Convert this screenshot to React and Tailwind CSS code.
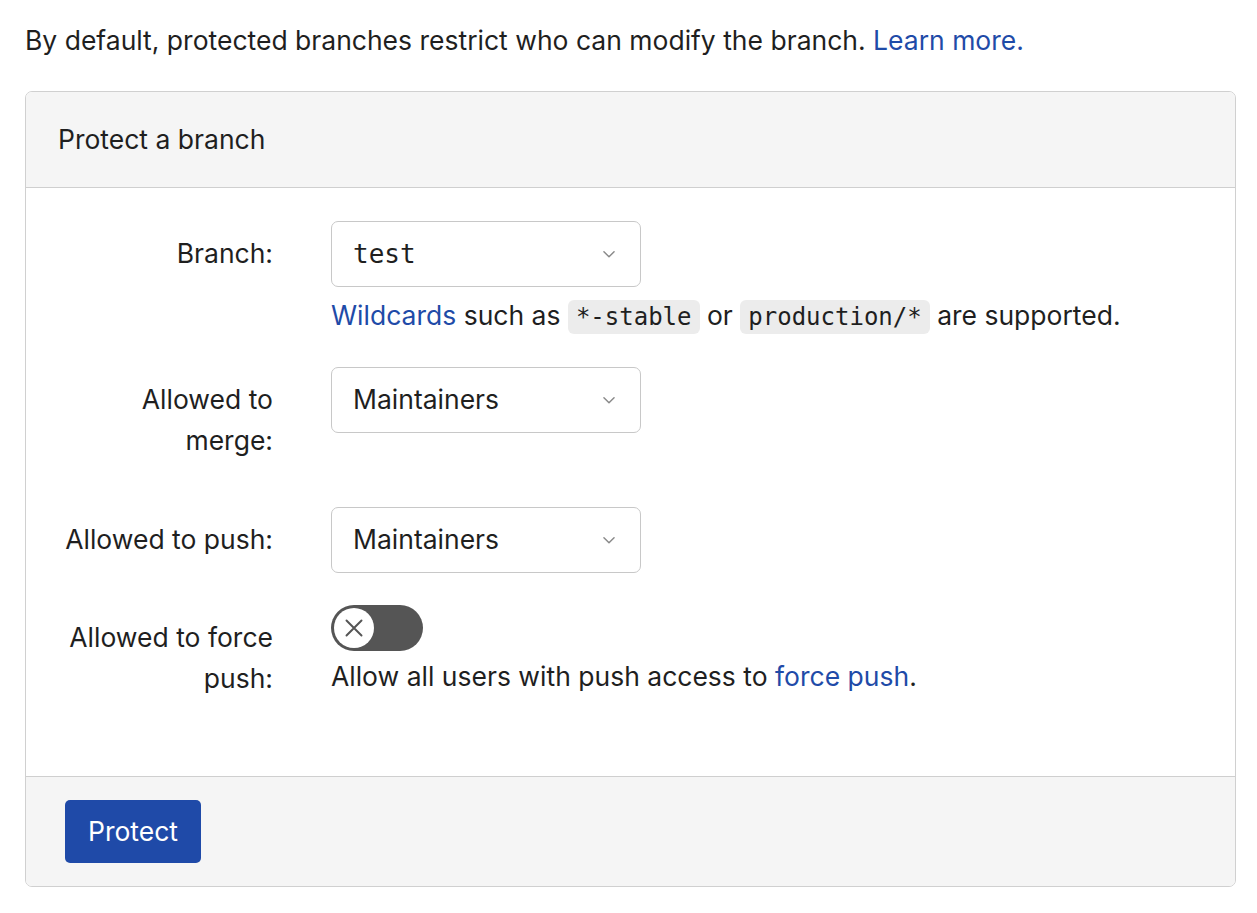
import { useState } from 'react';

const sans = { fontFamily: 'Inter, "Liberation Sans", Arial, sans-serif' };
const mono = { fontFamily: '"DejaVu Sans Mono", "Liberation Mono", monospace' };

function Chevron() {
  return (
    <svg className="w-[18px] h-[18px] text-[#8a8a8a]" viewBox="0 0 16 16" fill="none" stroke="currentColor" strokeWidth={1.3}>
      <path d="M3.5 6l4.5 4.5 4.5-4.5" strokeLinecap="round" strokeLinejoin="round" />
    </svg>
  );
}

function Select({ value, isMono }) {
  return (
    <div className="w-[310px] h-[66px] border border-[#c8c8c8] rounded-[7px] bg-white flex items-center justify-between pl-[21px] pr-[22px]">
      <span className={isMono ? 'text-[26px] text-[#1f1f1f]' : 'text-[26.5px] text-[#1f1f1f]'} style={isMono ? mono : sans}>
        {value}
      </span>
      <Chevron />
    </div>
  );
}

function Code({ children }) {
  return (
    <code className="bg-[#ececec] rounded-[6px] px-[8px] py-[3px] text-[24px] text-[#1f1f1f]" style={mono}>
      {children}
    </code>
  );
}

function Row({ label, children, className = '' }) {
  return (
    <div className={`flex items-start ${className}`}>
      <div className="w-[247px] shrink-0 flex justify-end">
        <label className="w-[212px] text-right text-[26.5px] leading-[41px] text-[#1f1f1f] pt-[12px]">{label}</label>
      </div>
      <div className="ml-[58px] flex-1">{children}</div>
    </div>
  );
}

export default function App() {
  const [force, setForce] = useState(false);

  return (
    <div className="min-h-[913px] bg-white text-[#1f1f1f] px-[25px] pt-[20px]" style={sans}>
      <p className="text-[26.5px] leading-[40px]">
        By default, protected branches restrict who can modify the branch.{' '}
        <a href="#" className="text-[#1f4ba8]">Learn more.</a>
      </p>

      <div className="mt-[31px] w-[1211px] border border-[#d0d0d0] rounded-[7px] overflow-hidden">
        <div className="h-[96px] bg-[#f5f5f5] border-b border-[#cfcfcf] flex items-center pl-[32px]">
          <h3 className="text-[26.5px]">Protect a branch</h3>
        </div>

        <div className="bg-white pt-[33px] pb-[77px]">
          <Row label="Branch:">
            <Select value="test" isMono />
            <p className="text-[26.5px] leading-[40px] mt-[8px]">
              <a href="#" className="text-[#1f4ba8]">Wildcards</a> such as <Code>*-stable</Code> or <Code>production/*</Code> are supported.
            </p>
          </Row>

          <Row label="Allowed to merge:" className="mt-[30px]">
            <Select value="Maintainers" />
          </Row>

          <Row label="Allowed to push:" className="mt-[46px]">
            <Select value="Maintainers" />
          </Row>

          <Row label="Allowed to force push:" className="mt-[32px]">
            <button
              type="button"
              onClick={() => setForce(!force)}
              className={`w-[92px] h-[46px] rounded-full flex items-center px-[3px] ${force ? 'bg-[#1f4ba8] justify-end' : 'bg-[#555555] justify-start'}`}
            >
              <span className="w-[40px] h-[40px] rounded-full bg-white flex items-center justify-center">
                <svg className="w-[24px] h-[24px] text-[#555555]" viewBox="0 0 16 16" fill="none" stroke="currentColor" strokeWidth={1.3}>
                  <path d="M3 3l10 10M13 3L3 13" strokeLinecap="round" />
                </svg>
              </span>
            </button>
            <p className="text-[26.5px] leading-[40px] mt-[5px]">
              Allow all users with push access to <a href="#" className="text-[#1f4ba8]">force push</a>.
            </p>
          </Row>
        </div>

        <div className="bg-[#f5f5f5] border-t border-[#cfcfcf] pt-[23px] pb-[23px] pl-[39px]">
          <button className="h-[63px] px-[23px] rounded-[5px] bg-[#1f4aa8] text-white text-[26.5px]">Protect</button>
        </div>
      </div>
    </div>
  );
}
